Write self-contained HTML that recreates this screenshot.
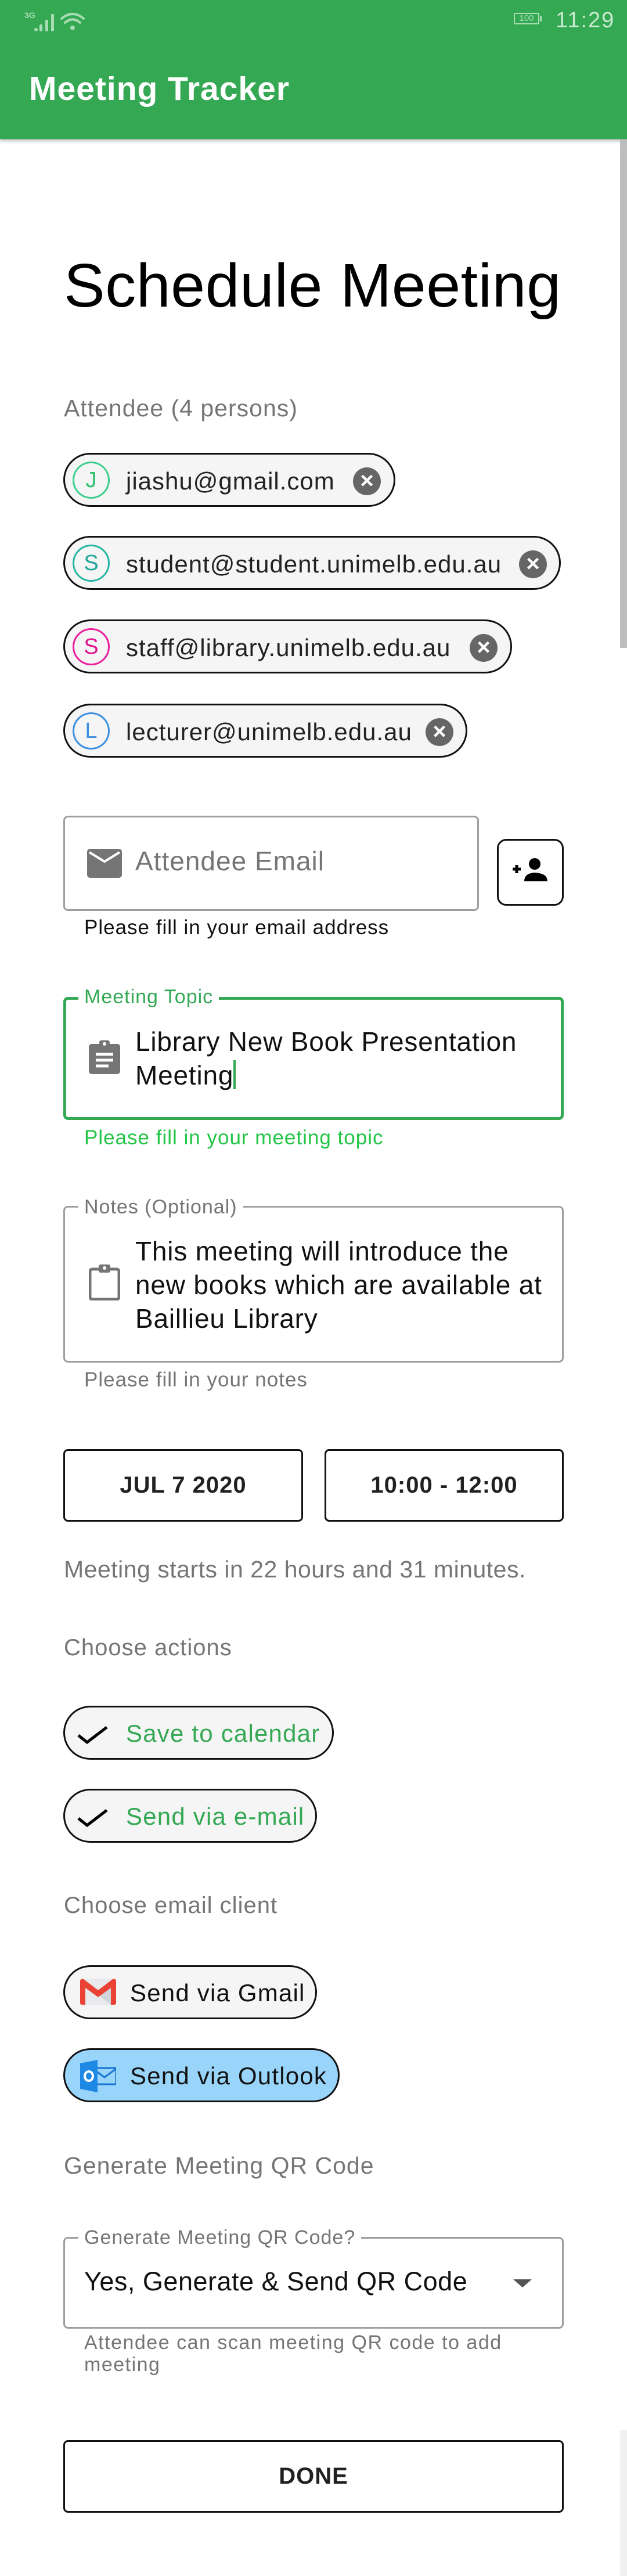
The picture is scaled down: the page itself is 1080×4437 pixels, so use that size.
<!DOCTYPE html>
<html><head><meta charset="utf-8">
<style>
*{box-sizing:border-box;margin:0;padding:0}
body{width:1080px;height:4437px;background:#fff;font-family:"Liberation Sans",sans-serif;position:relative;overflow:hidden;color:#212121}
.a{position:absolute;white-space:nowrap}
.bar{position:absolute;left:0;top:0;width:1080px;height:240px;background:#34a853;box-shadow:0 3px 6px rgba(0,0,0,.25)}
.chip{position:absolute;left:109px;height:93px;border:3px solid #111;border-radius:47px;background:#f5f5f5}
.av{position:absolute;left:13px;top:12px;width:64px;height:64px;border:3px solid;border-radius:50%;font-size:38px;text-align:center;line-height:58px}
.ct{position:absolute;left:105px;top:22px;font-size:42px;letter-spacing:1px;color:#222}
.x{position:absolute;top:22px;width:48px;height:48px;border-radius:50%;background:#666;color:#fff;font-size:40px;line-height:46px;text-align:center;font-weight:bold}
.gray{color:#757575}
.box{position:absolute;left:109px;width:862px;border:3px solid #9e9e9e;border-radius:8px}
.lbl{position:absolute;background:#fff;padding:0 10px;font-size:34px;letter-spacing:1px}
.btn{position:absolute;border:3px solid #111;border-radius:8px;font-weight:bold;font-size:40px;text-align:center;letter-spacing:1px}
.act{position:absolute;left:109px;height:93px;border:3px solid #111;border-radius:47px;background:#f5f5f5}
.at{position:absolute;top:21px;font-size:42px;letter-spacing:1.2px}
</style></head><body>
<div class="bar">
  <div class="a" style="left:42px;top:18px;font-size:14px;font-weight:bold;color:#a8dcb4">3G</div>
  <svg class="a" style="left:58px;top:18px" width="90" height="36" viewBox="0 0 90 36">
    <g fill="#a8dcb4"><circle cx="4" cy="33" r="3"/><rect x="10" y="24" width="5" height="12" rx="2"/><rect x="20" y="16" width="5" height="20" rx="2"/><rect x="30" y="6" width="5" height="30" rx="2"/></g>
    <g fill="none" stroke="#a8dcb4" stroke-width="4" stroke-linecap="round"><path d="M48 14 Q67 -2 86 14"/><path d="M54 21 Q67 10 80 21"/></g>
    <circle cx="67" cy="30" r="4" fill="#a8dcb4"/>
  </svg>
  <div class="a" style="left:885px;top:22px;width:44px;height:20px;border:2px solid #a8dcb4;border-radius:3px;font-size:15px;color:#a8dcb4;text-align:center;line-height:16px">100</div>
  <div class="a" style="left:930px;top:28px;width:3px;height:9px;background:#a8dcb4"></div>
  <div class="a" style="left:957px;top:14px;font-size:38px;color:#c8ead0;letter-spacing:2px">11:29</div>
  <div class="a" style="left:50px;top:120px;font-size:57px;font-weight:bold;color:#fff;letter-spacing:1px">Meeting Tracker</div>
</div>
<div class="a" style="left:1068px;top:240px;width:12px;height:876px;background:#bdbdbd"></div>
<div class="a" style="left:1068px;top:4186px;width:12px;height:251px;background:#f0f0f0"></div>

<div class="a" style="left:110px;top:432px;font-size:106px;color:#000;letter-spacing:.5px">Schedule Meeting</div>
<div class="a gray" style="left:110px;top:680px;font-size:41px;letter-spacing:1px">Attendee (4 persons)</div>

<div class="chip" style="top:780px;width:572px"><div class="av" style="border-color:#3ecf8e;color:#2fbf71">J</div><div class="ct">jiashu@gmail.com</div><div class="x" style="left:496px">×</div></div>
<div class="chip" style="top:923px;width:857px"><div class="av" style="border-color:#26b5a5;color:#20a898">S</div><div class="ct">student@student.unimelb.edu.au</div><div class="x" style="left:782px">×</div></div>
<div class="chip" style="top:1067px;width:773px"><div class="av" style="border-color:#e91e9c;color:#e0168f">S</div><div class="ct">staff@library.unimelb.edu.au</div><div class="x" style="left:697px">×</div></div>
<div class="chip" style="top:1212px;width:696px"><div class="av" style="border-color:#3d8fe0;color:#3d8fe0">L</div><div class="ct">lecturer@unimelb.edu.au</div><div class="x" style="left:621px">×</div></div>

<div class="box" style="top:1405px;width:716px;height:164px"></div>
<svg class="a" style="left:150px;top:1462px" width="60" height="50" viewBox="0 0 60 50"><rect x="0" y="0" width="60" height="50" rx="5" fill="#757575"/><path d="M4 6 L30 22 L56 6" fill="none" stroke="#fff" stroke-width="4"/></svg>
<div class="a" style="left:233px;top:1456px;font-size:46px;color:#757575;letter-spacing:1px">Attendee Email</div>
<div class="a" style="left:856px;top:1445px;width:115px;height:115px;border:3px solid #111;border-radius:16px"></div>
<svg class="a" style="left:883px;top:1478px" width="62" height="40" viewBox="0 0 62 40"><path d="M0 19h14M7 12v14" stroke="#000" stroke-width="5"/><circle cx="38" cy="10" r="10" fill="#000"/><path d="M20 40 Q20 26 38 25 Q60 26 60 40Z" fill="#000"/></svg>
<div class="a" style="left:145px;top:1578px;font-size:35px;letter-spacing:1px;color:#111">Please fill in your email address</div>

<div class="box" style="top:1717px;height:212px;border:5px solid #34a853"></div>
<div class="lbl" style="left:135px;top:1698px;color:#34a853">Meeting Topic</div>
<svg class="a" style="left:153px;top:1790px" width="54" height="60" viewBox="0 0 54 60"><rect x="0" y="8" width="54" height="52" rx="5" fill="#757575"/><rect x="18" y="2" width="18" height="12" rx="3" fill="#757575"/><circle cx="27" cy="8" r="3" fill="#fff"/><path d="M12 26h30M12 36h30M12 46h22" stroke="#fff" stroke-width="5"/></svg>
<div class="a" style="left:233px;top:1765px;font-size:46px;line-height:58px;color:#111;letter-spacing:.8px">Library New Book Presentation<br>Meeting<span style="display:inline-block;width:4px;height:50px;background:#34a853;vertical-align:-8px"></span></div>
<div class="a" style="left:145px;top:1940px;font-size:35px;letter-spacing:1px;color:#22c545">Please fill in your meeting topic</div>

<div class="box" style="top:2077px;height:270px"></div>
<div class="lbl gray" style="left:135px;top:2060px">Notes (Optional)</div>
<svg class="a" style="left:153px;top:2176px" width="54" height="64" viewBox="0 0 54 64"><rect x="2" y="10" width="50" height="52" rx="4" fill="none" stroke="#757575" stroke-width="5"/><rect x="17" y="2" width="20" height="14" rx="3" fill="#757575"/><circle cx="27" cy="8" r="3" fill="#fff"/></svg>
<div class="a" style="left:233px;top:2126px;font-size:46px;line-height:58px;color:#111;letter-spacing:.8px">This meeting will introduce the<br>new books which are available at<br>Baillieu Library</div>
<div class="a gray" style="left:145px;top:2357px;font-size:35px;letter-spacing:1px">Please fill in your notes</div>

<div class="btn" style="left:109px;top:2496px;width:413px;height:125px;line-height:119px">JUL 7 2020</div>
<div class="btn" style="left:559px;top:2496px;width:412px;height:125px;line-height:119px">10:00 - 12:00</div>
<div class="a gray" style="left:110px;top:2680px;font-size:41px;letter-spacing:.5px">Meeting starts in 22 hours and 31 minutes.</div>

<div class="a gray" style="left:110px;top:2816px;font-size:40px;letter-spacing:1px">Choose actions</div>
<div class="act" style="top:2938px;width:466px"><svg class="a" style="left:20px;top:28px" width="56" height="36" viewBox="0 0 56 36"><path d="M3 20 L18 32 L52 6" fill="none" stroke="#000" stroke-width="5"/></svg><div class="at" style="left:105px;color:#34a853">Save to calendar</div></div>
<div class="act" style="top:3081px;width:437px"><svg class="a" style="left:20px;top:28px" width="56" height="36" viewBox="0 0 56 36"><path d="M3 20 L18 32 L52 6" fill="none" stroke="#000" stroke-width="5"/></svg><div class="at" style="left:105px;color:#34a853">Send via e-mail</div></div>

<div class="a gray" style="left:110px;top:3260px;font-size:40px;letter-spacing:1px">Choose email client</div>
<div class="act" style="top:3385px;width:437px"><svg class="a" style="left:26px;top:20px" width="62" height="46" viewBox="0 0 62 46"><rect x="0" y="0" width="62" height="46" rx="4" fill="#e8eaed"/><path d="M31 28 L62 4 V44 H52 Z" fill="#cfd5da"/><path d="M0 4 V42 a3 3 0 0 0 3 3 H9 V16 L31 32 L53 16 V45 H59 a3 3 0 0 0 3 -3 V4 a4 4 0 0 0 -6 -3 L31 20 L6 1 a4 4 0 0 0 -6 3Z" fill="#ea4335"/></svg><div class="at" style="left:112px;color:#111">Send via Gmail</div></div>
<div class="act" style="top:3528px;width:476px;background:#99d4fb"><svg class="a" style="left:26px;top:17px" width="62" height="56" viewBox="0 0 62 56"><rect x="22" y="14" width="40" height="28" fill="none" stroke="#1976d2" stroke-width="3"/><path d="M23 16 L42 30 L61 16" fill="none" stroke="#1976d2" stroke-width="3"/><path d="M0 6 L30 0 V56 L0 50Z" fill="#1e88e5"/><ellipse cx="15" cy="28" rx="7" ry="8" fill="none" stroke="#fff" stroke-width="4"/></svg><div class="at" style="left:112px;color:#111">Send via Outlook</div></div>

<div class="a gray" style="left:110px;top:3707px;font-size:41px;letter-spacing:1px">Generate Meeting QR Code</div>
<div class="box" style="top:3853px;height:158px"></div>
<div class="lbl gray" style="left:135px;top:3835px">Generate Meeting QR Code?</div>
<div class="a" style="left:145px;top:3904px;font-size:45px;color:#111;letter-spacing:.5px">Yes, Generate &amp; Send QR Code</div>
<svg class="a" style="left:884px;top:3926px" width="32" height="16" viewBox="0 0 32 16"><path d="M0 0 H32 L16 14Z" fill="#555"/></svg>
<div class="a gray" style="left:145px;top:4016px;font-size:34px;line-height:38px;letter-spacing:1.5px">Attendee can scan meeting QR code to add<br>meeting</div>

<div class="btn" style="left:109px;top:4203px;width:862px;height:125px;line-height:119px;font-size:40px">DONE</div>
</body></html>
